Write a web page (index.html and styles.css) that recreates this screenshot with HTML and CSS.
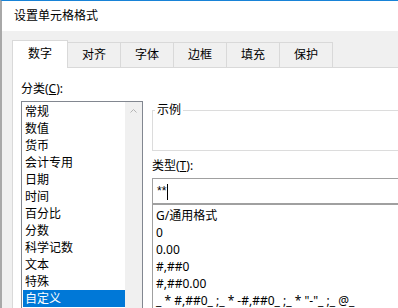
FILE: index.html
```html
<!DOCTYPE html>
<html lang="zh-CN">
<head>
    <meta charset="UTF-8">
    <meta name="viewport" content="width=device-width, initial-scale=1.0">
    <title>设置单元格格式</title>
    <link rel="stylesheet" href="styles.css">
</head>
<body>

    <div class="dialog">
        <div class="titlebar">设置单元格格式</div>

        <div class="dialog-body">
            <!-- Tab strip -->
            <div class="tabs">
                <div class="tab active">数字</div>
                <div class="tab">对齐</div>
                <div class="tab">字体</div>
                <div class="tab">边框</div>
                <div class="tab">填充</div>
                <div class="tab">保护</div>
            </div>

            <div class="tab-page">
                <!-- Category list -->
                <div class="category">
                    <div class="field-label">分类(<u>C</u>):</div>
                    <div class="listbox">
                        <ul class="category-list">
                            <li>常规</li>
                            <li>数值</li>
                            <li>货币</li>
                            <li>会计专用</li>
                            <li>日期</li>
                            <li>时间</li>
                            <li>百分比</li>
                            <li>分数</li>
                            <li>科学记数</li>
                            <li>文本</li>
                            <li>特殊</li>
                            <li class="selected">自定义</li>
                        </ul>
                        <div class="scrollbar">
                            <svg width="7" height="4" viewBox="0 0 7 4">
                                <path d="M0.5 3.5 L3.5 0.5 L6.5 3.5" fill="none" stroke="#b4b4b4" stroke-width="1"/>
                            </svg>
                        </div>
                    </div>
                </div>

                <!-- Format editor -->
                <div class="format">
                    <fieldset class="sample">
                        <legend>示例</legend>
                    </fieldset>

                    <div class="field-label type-label">类型(<u>T</u>):</div>
                    <div class="type-input">**<span class="caret"></span></div>

                    <ul class="format-list">
                        <li>G/通用格式</li>
                        <li>0</li>
                        <li>0.00</li>
                        <li>#,##0</li>
                        <li>#,##0.00</li>
                        <li>_ * #,##0_ ;_ * -#,##0_ ;_ * "-"_ ;_ @_</li>
                    </ul>
                </div>
            </div>
        </div>
    </div>

</body>
</html>
```

FILE: styles.css
```css
* {
    box-sizing: border-box;
}
html, body {
    margin: 0;
    overflow: hidden;
}
body {
    font-family: "Noto Sans", "Noto Sans CJK SC", sans-serif;
    font-size: 12px;
    color: #000;
    background: #fff;
}
.dialog {
    width: 398px;
    height: 308px;
    overflow: hidden;
    border-top: 1px solid #1883d7;
    border-left: 2px solid #a8a8a8;
}
.titlebar {
    height: 30px;
    line-height: 30px;
    padding-left: 12px;
    background: #fff;
}
.dialog-body {
    width: 540px;
    height: 300px;
    padding: 9px 0 0 10px;
    background: #f0f0f0;
}
.tabs {
    display: flex;
    align-items: flex-end;
    height: 27px;
}
.tab {
    width: 53px;
    height: 25px;
    line-height: 24px;
    text-align: center;
    border-top: 1px solid #d9d9d9;
    border-right: 1px solid #d9d9d9;
}
.tab.active {
    position: relative;
    z-index: 1;
    width: 56px;
    height: 28px;
    line-height: 26px;
    margin-bottom: -1px;
    background: #fff;
    border-left: 1px solid #d9d9d9;
}
.tab-page {
    display: flex;
    height: 260px;
    padding: 13px 0 0 8px;
    background: #fff;
    border-top: 1px solid #d9d9d9;
    border-left: 1px solid #d9d9d9;
}
.field-label {
    line-height: 16px;
}
.category {
    width: 122px;
}
.listbox {
    display: flex;
    height: 220px;
    margin-top: 4px;
    border: 1px solid #828790;
}
.category-list {
    flex: 1;
    list-style: none;
    margin: 0;
    padding: 1px 0 0 1px;
}
.category-list li,
.format-list li {
    height: 17px;
    line-height: 17px;
    white-space: nowrap;
}
.category-list li {
    padding-left: 2px;
}
.category-list li.selected {
    background: #0078d7;
    color: #fff;
}
.scrollbar {
    width: 17px;
    display: flex;
    justify-content: center;
    align-items: flex-start;
    padding-top: 7px;
    background: #f0f0f0;
}
.scrollbar svg {
    display: block;
}
.format {
    flex: 1;
    margin-left: 9px;
    padding-top: 22px;
}
.sample {
    height: 48px;
    margin: 0;
    padding: 0 0 0 2px;
    border: 1px solid #dcdcdc;
}
.sample legend {
    padding: 0 2px;
    line-height: 14px;
}
.type-label {
    margin-top: 7px;
}
.type-input {
    height: 26px;
    margin-top: 4px;
    padding-left: 4px;
    font-family: "Liberation Sans", sans-serif;
    line-height: 24px;
    border: 1px solid #a0a0a0;
}
.caret {
    display: inline-block;
    width: 1px;
    height: 16px;
    margin-left: 1px;
    vertical-align: middle;
    background: #000;
}
.format-list {
    list-style: none;
    height: 120px;
    margin: 0;
    padding: 2px 0 0 3px;
    border: 1px solid #a0a0a0;
}
```
